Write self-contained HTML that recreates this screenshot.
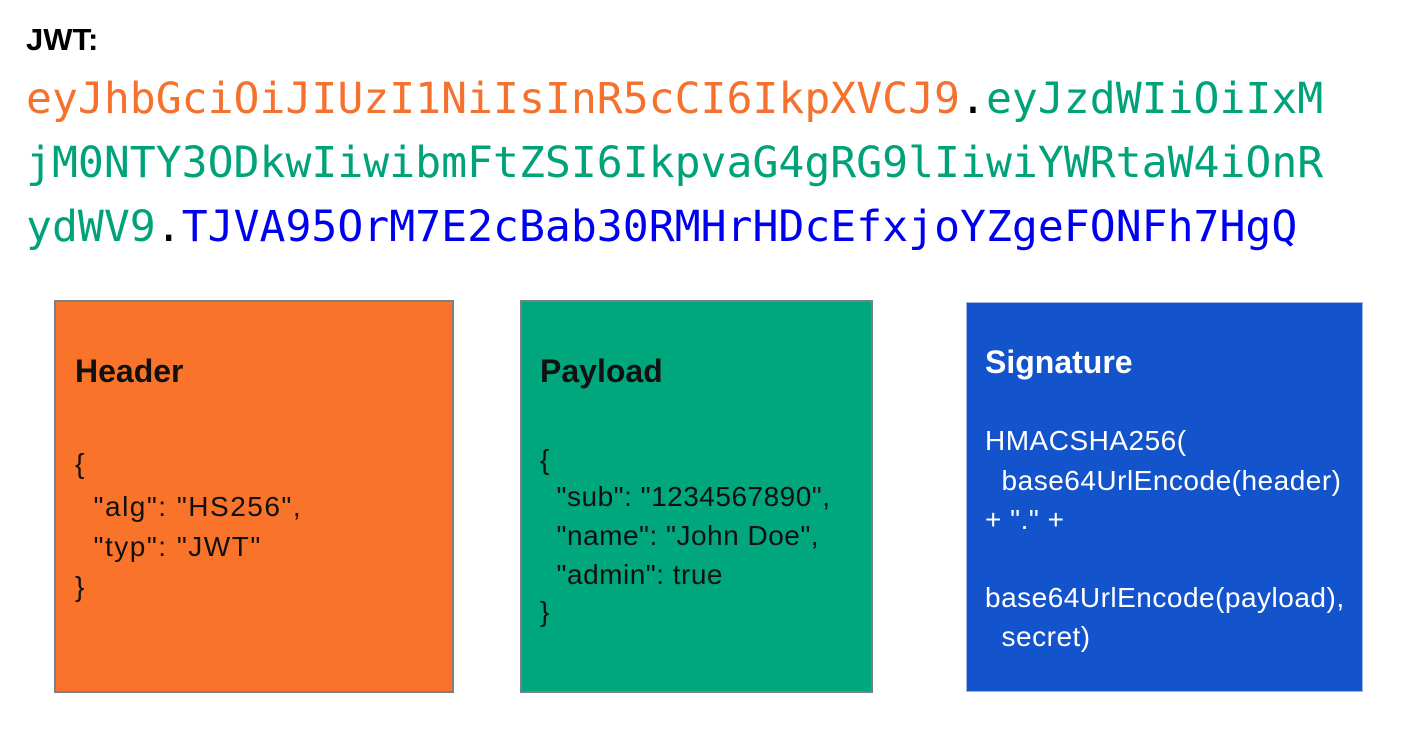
<!DOCTYPE html>
<html><head><meta charset="utf-8"><style>
html,body{margin:0;padding:0;background:#fff;width:1406px;height:732px;overflow:hidden;position:relative}
.t{position:absolute;left:26px;top:22px;font:bold 31px "Liberation Sans",sans-serif;color:#000}
.m{position:absolute;left:26px;font:43.1px "DejaVu Sans Mono",monospace;white-space:pre;line-height:1}
.o{color:#F5712E}.g{color:#00A27A}.b{color:#0000F0}.k{color:#000}
.box{position:absolute;box-sizing:border-box}
.box div{position:absolute;white-space:pre;font-family:"Liberation Sans",sans-serif;font-size:28px;line-height:1;letter-spacing:0.5px}
.box div.h{font-weight:bold;font-size:32px;letter-spacing:0}
</style></head><body>
<div class="t">JWT:</div>
<div class="m" style="top:78px"><span class="o">eyJhbGciOiJIUzI1NiIsInR5cCI6IkpXVCJ9</span><span class="k">.</span><span class="g">eyJzdWIiOiIxM</span></div>
<div class="m" style="top:142px"><span class="g">jM0NTY3ODkwIiwibmFtZSI6IkpvaG4gRG9lIiwiYWRtaW4iOnR</span></div>
<div class="m" style="top:206px"><span class="g">ydWV9</span><span class="k">.</span><span class="b">TJVA95OrM7E2cBab30RMHrHDcEfxjoYZgeFONFh7HgQ</span></div>

<div class="box" style="left:54px;top:300px;width:400px;height:393px;background:#F9732A;border:2px solid #7b7f87;color:#111">
<div class="h" style="left:19px;top:53px">Header</div>
<div style="left:19px;top:148px;letter-spacing:1.5px">{</div>
<div style="left:19px;top:191px;letter-spacing:1.5px">  "alg": "HS256",</div>
<div style="left:19px;top:231px;letter-spacing:1.5px">  "typ": "JWT"</div>
<div style="left:19px;top:271px">}</div>
</div>

<div class="box" style="left:520px;top:300px;width:353px;height:393px;background:#00A67C;border:2px solid #7b7f87;color:#111">
<div class="h" style="left:18px;top:53px">Payload</div>
<div style="left:18px;top:144px">{</div>
<div style="left:18px;top:181px">  "sub": "1234567890",</div>
<div style="left:18px;top:220px">  "name": "John Doe",</div>
<div style="left:18px;top:259px">  "admin": true</div>
<div style="left:18px;top:296px">}</div>
</div>

<div class="box" style="left:966px;top:302px;width:397px;height:390px;background:#1353CB;border:1px solid #9fb4e0;color:#fff">
<div class="h" style="left:18px;top:43px">Signature</div>
<div style="left:18px;top:124px">HMACSHA256(</div>
<div style="left:18px;top:164px">  base64UrlEncode(header)</div>
<div style="left:18px;top:203px">+ "." +</div>
<div style="left:18px;top:281px">base64UrlEncode(payload),</div>
<div style="left:18px;top:320px">  secret)</div>
</div>
</body></html>
